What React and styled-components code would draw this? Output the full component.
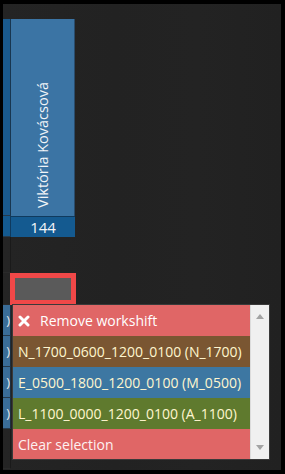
import styled, { createGlobalStyle } from "styled-components"

const GlobalStyle = createGlobalStyle`
    html, body {
        margin: 0;
        padding: 0;
        background: #000;
    }
    body {
        font-family: "Open Sans", "Noto Sans", sans-serif;
    }
`

const Frame = styled.div`
    width: 285px;
    height: 474px;
    box-sizing: border-box;
    padding: 4px 4px 4px 3px;
    background: #000;
`
const Board = styled.div`
    position: relative;
    height: 100%;
    overflow: hidden;
    padding-top: 15px;
    box-sizing: border-box;
    background: linear-gradient(90deg, #242424 0%, #222 40%, #232323 70%, #212121 100%);
`
const Row = styled.div`
    display: flex;
    height: ${(p) => p.h}px;
    box-sizing: border-box;
`
const Strip = styled.div`
    width: 8px;
    flex: none;
    background: ${(p) => p.bg || "transparent"};
    border-right: 1px solid ${(p) => p.edge || "#1a1a1a"};
    border-bottom: 1px solid ${(p) => (p.bg ? "#263a4c" : "#2a2a2a")};
    color: #e8e8e8;
    font-size: 13px;
    display: flex;
    align-items: center;
    justify-content: flex-end;
    overflow: hidden;
    box-sizing: border-box;
`
const NameCard = styled.div`
    width: 64px;
    background: #3b74a4;
    border-right: 1px solid #2a4c6c;
    display: flex;
    flex-direction: column;
    align-items: center;
    justify-content: flex-end;
    padding-bottom: 8px;
    box-sizing: border-box;
`
const Name = styled.span`
    writing-mode: vertical-rl;
    transform: rotate(180deg);
    color: #f2f5f8;
    font-size: 14.5px;
    white-space: nowrap;
`
const Count = styled.div`
    width: 64px;
    background: #145a90;
    color: #f4f6f8;
    font-size: 15px;
    font-weight: 500;
    display: flex;
    align-items: center;
    justify-content: center;
    box-sizing: border-box;
    border-top: 1px solid #0f3a5e;
`
const Selected = styled.div`
    margin-left: -1px;
    width: 66px;
    height: 32px;
    box-sizing: border-box;
    border: 5px solid #f04848;
    background: #5a5a5a;
`
const Dropdown = styled.div`
    position: absolute;
    left: 9px;
    top: 300px;
    width: 256px;
    height: 154px;
    display: flex;
    border: 1px solid #3a3a3a;
    box-sizing: content-box;
`
const List = styled.ul`
    list-style: none;
    margin: 0;
    padding: 0;
    flex: 1;
    display: flex;
    flex-direction: column;
`
const Item = styled.li`
    height: 31px;
    flex: none;
    display: flex;
    align-items: center;
    gap: 10px;
    padding-left: 5px;
    background: ${(p) => p.bg};
    color: ${(p) => p.fg || "#fff"};
    font-size: 14px;
    white-space: nowrap;
    overflow: hidden;
    &:last-child {
        height: 30px;
    }
`
const Scroll = styled.div`
    width: 19px;
    background: #f0f0f0;
    border-left: 1px solid #dcdcdc;
    display: flex;
    flex-direction: column;
    justify-content: space-between;
    align-items: center;
    padding: 9px 0;
    box-sizing: border-box;
`
const Arrow = styled.div`
    width: 0;
    height: 0;
    border-left: 4px solid transparent;
    border-right: 4px solid transparent;
    ${(p) => (p.up ? "border-bottom: 5px solid #a3a3a3;" : "border-top: 5px solid #a3a3a3;")}
`

const options = [
    { label: "N_1700_0600_1200_0100 (N_1700)", bg: "#7a5632" },
    { label: "E_0500_1800_1200_0100 (M_0500)", bg: "#3d77a2" },
    { label: "L_1100_0000_1200_0100 (A_1100)", bg: "#5f7a2e" },
]

export default function App() {
    return (
        <Frame>
            <GlobalStyle />
            <Board>
                <Row h={197}>
                    <Strip bg="#1a5a8e" edge="#183650" />
                    <NameCard>
                        <Name>Viktória Kovácsová</Name>
                    </NameCard>
                </Row>
                <Row h={21}>
                    <Strip bg="#145a90" edge="#0f3a5e" />
                    <Count>144</Count>
                </Row>
                <Row h={36}>
                    <Strip />
                </Row>
                <Row h={32}>
                    <Strip />
                    <Selected />
                </Row>
                {[0, 1, 2, 3].map((i) => (
                    <Row h={31} key={i}>
                        <Strip bg="#3a6d98" edge="#1d2f3f">)</Strip>
                    </Row>
                ))}
                <Row h={40}>
                    <Strip />
                </Row>

                <Dropdown>
                    <List>
                        <Item bg="#e06666">
                            <svg width="12" height="12" viewBox="0 0 12 12">
                                <path d="M2 2 L10 10 M10 2 L2 10" stroke="#fff" strokeWidth="3" strokeLinecap="round" />
                            </svg>
                            Remove workshift
                        </Item>
                        {options.map((o) => (
                            <Item key={o.label} bg={o.bg} fg="#fff6cf">{o.label}</Item>
                        ))}
                        <Item bg="#e06666" fg="#fdf2f2">Clear selection</Item>
                    </List>
                    <Scroll>
                        <Arrow up />
                        <Arrow />
                    </Scroll>
                </Dropdown>
            </Board>
        </Frame>
    )
}
